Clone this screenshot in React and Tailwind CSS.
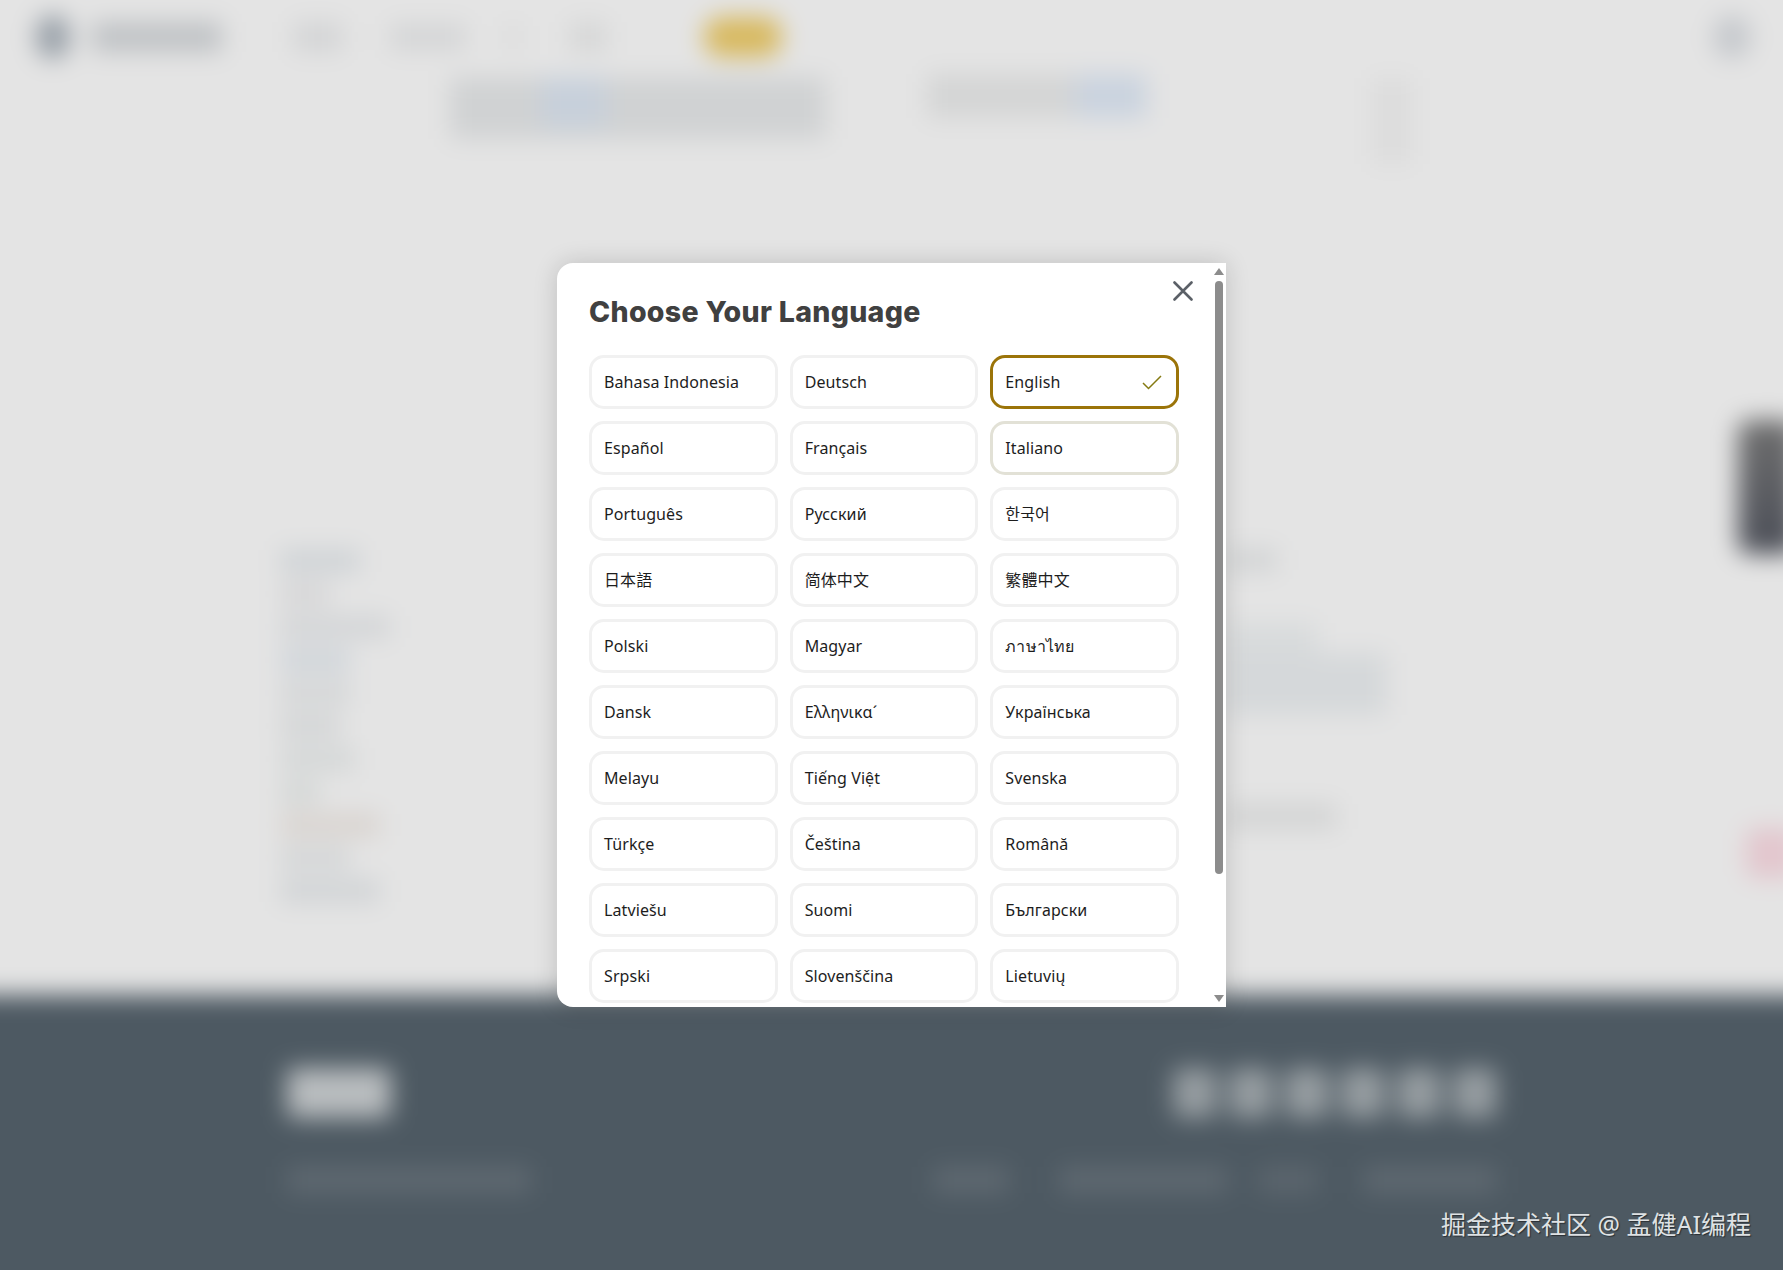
import React from "react";

const languages = [
  "Bahasa Indonesia", "Deutsch", "English",
  "Español", "Français", "Italiano",
  "Português", "Русский", "한국어",
  "日本語", "简体中文", "繁體中文",
  "Polski", "Magyar", "ภาษาไทย",
  "Dansk", "Ελληνικα´", "Українська",
  "Melayu", "Tiếng Việt", "Svenska",
  "Türkçe", "Čeština", "Română",
  "Latviešu", "Suomi", "Български",
  "Srpski", "Slovenščina", "Lietuvių",
];

const sideRows = [
  ["w-[80px]", "bg-[#cfd3d6]"],
  ["w-[50px]", "bg-[#d6d6d7]"],
  ["w-[110px]", "bg-[#d3d5d7]"],
  ["w-[70px]", "bg-[#d0d5da]"],
  ["w-[70px]", "bg-[#d4d6d7]"],
  ["w-[60px]", "bg-[#d3d5d6]"],
  ["w-[75px]", "bg-[#d4d7d7]"],
  ["w-[40px]", "bg-[#d4d7d6]"],
  ["w-[100px]", "bg-[#d9d4d0]"],
  ["w-[70px]", "bg-[#d4d6d7]"],
  ["w-[100px]", "bg-[#d1d4d6]"],
];

function Blob({ className }) {
  return <div className={className} />;
}

function BlurredPage() {
  return (
    <div className="relative -ml-10 -mt-10 h-[1350px] w-[1863px] bg-[#e4e4e4] pl-10 pt-10 blur-[12px]">
      {/* header */}
      <div className="flex h-[74px] items-center">
        <Blob className="ml-[36px] h-[44px] w-[34px] rounded-full bg-[#98a0a8]" />
        <Blob className="ml-[22px] h-[30px] w-[130px] bg-[#bfc2c5]" />
        <Blob className="ml-[71px] h-[30px] w-[50px] bg-[#d4d5d6]" />
        <Blob className="ml-[47px] h-[26px] w-[76px] bg-[#d4d5d6]" />
        <Blob className="ml-[40px] h-[24px] w-[14px] bg-[#d8d9d9]" />
        <Blob className="ml-[49px] h-[30px] w-[38px] bg-[#d6d7d7]" />
        <Blob className="ml-[97px] h-[40px] w-[78px] rounded-[18px] bg-[#d8b95f]" />
        <Blob className="ml-auto mr-[72px] h-[44px] w-[38px] rounded-full bg-[#c6c9cd]" />
      </div>

      {/* hero strip */}
      <div className="flex h-[83px] items-start pl-[450px]">
        <div className="mt-[3px] flex h-[62px] w-[376px] bg-[#d0d2d3]">
          <Blob className="ml-[92px] h-[50px] w-[64px] bg-[#c7d0db]" />
        </div>
        <div className="ml-[101px] flex h-[44px] w-[220px] bg-[#d4d5d5]">
          <Blob className="ml-auto h-full w-[72px] bg-[#cad3df]" />
        </div>
        <Blob className="ml-[225px] mt-[4px] h-[86px] w-[40px] bg-[#dcdcdc]" />
      </div>

      {/* body columns */}
      <div className="flex h-[838px] pl-[280px] pt-[392px]">
        <div className="flex w-[947px] flex-col gap-[9px]">
          {sideRows.map(([width, color], i) => (
            <Blob key={i} className={`h-[24px] ${width} ${color}`} />
          ))}
        </div>
        <div className="flex flex-col">
          <Blob className="h-[22px] w-[50px] bg-[#d1d3d4]" />
          <Blob className="mt-[52px] h-[30px] w-[90px] bg-[#d8dbdc]" />
          <Blob className="h-[62px] w-[160px] bg-[#d5d8da]" />
          <Blob className="mt-[89px] h-[25px] w-[110px] bg-[#d3d4d4]" />
        </div>
      </div>

      {/* footer */}
      <div className="-ml-10 h-[320px] bg-[#4d5962] pl-[327px] pr-[326px] pt-[73px]">
        <div className="flex h-[50px] items-center">
          <Blob className="h-[50px] w-[104px] rounded-md bg-[#b9bdbf]" />
          <div className="ml-auto flex gap-[12px]">
            {[0, 1, 2, 3, 4, 5].map((i) => (
              <Blob key={i} className="h-[50px] w-[44px] rounded-lg bg-[#969da1]" />
            ))}
          </div>
        </div>
        <div className="mt-[47px] flex h-[30px] items-center">
          <Blob className="h-[26px] w-[245px] bg-[#5f6971]" />
          <Blob className="ml-[402px] h-[26px] w-[76px] bg-[#5f6971]" />
          <Blob className="ml-[50px] h-[26px] w-[170px] bg-[#5f6971]" />
          <Blob className="ml-[30px] h-[26px] w-[60px] bg-[#5c666e]" />
          <Blob className="ml-[45px] h-[26px] w-[135px] bg-[#5f6971]" />
        </div>
      </div>

      {/* floating widgets on the right edge */}
      <div className="absolute left-[1778px] top-[460px] h-[134px] w-[60px] rounded-xl bg-gradient-to-b from-[#6f6f6f] to-[#4c4f58]" />
      <div className="absolute left-[1786px] top-[868px] h-[50px] w-[50px] rounded-lg bg-[#e3c6cd]" />
    </div>
  );
}

function LanguageButton({ label }) {
  const selected = label === "English";
  const hovered = label === "Italiano";
  let border = "border-[#f1f1f1]";
  if (selected) border = "border-[#9b7409]";
  if (hovered) border = "border-[#e2e1d6]";

  return (
    <button
      className={`flex h-[54px] items-center justify-between rounded-[15px] border-[3px] bg-white pl-[12px] pr-[14px] text-left text-[16px] tracking-[0.1px] text-[#1d1d1d] ${border}`}
    >
      <span>{label}</span>
      {selected && (
        <svg width="20" height="15" viewBox="0 0 20 15" fill="none" stroke="#857a12" strokeWidth="1.5">
          <path d="M1 8l5.5 5.5L19 1" />
        </svg>
      )}
    </button>
  );
}

function LanguageModal() {
  return (
    <div className="absolute left-[557px] top-[263px] flex h-[744px] w-[669px] overflow-hidden rounded-l-[16px] bg-white shadow-[0_0_24px_rgba(0,0,0,0.16)]">
      <div className="flex-1 overflow-hidden pl-[32px] pr-[32px] pt-[27px]">
        <h2 className="h-[65px] font-['Inter'] text-[28.5px] font-extrabold leading-[44px] tracking-[0.3px] text-[#404040]">
          Choose Your Language
        </h2>
        <div className="grid grid-cols-3 gap-x-[12px] gap-y-[12px]">
          {languages.map((label) => (
            <LanguageButton key={label} label={label} />
          ))}
        </div>
      </div>

      {/* scrollbar */}
      <div className="flex w-[15px] flex-col items-center py-[5px]">
        <svg width="10" height="7" viewBox="0 0 10 7" fill="#8c8c8c">
          <path d="M5 0l5 7H0z" />
        </svg>
        <div className="mt-[6px] h-[593px] w-[8px] rounded-full bg-[#8c8c8c]" />
        <svg className="mt-auto" width="10" height="7" viewBox="0 0 10 7" fill="#8c8c8c">
          <path d="M5 7L0 0h10z" />
        </svg>
      </div>

      {/* close */}
      <button className="absolute left-[616px] top-[18px]">
        <svg width="20" height="20" viewBox="0 0 20 20" fill="none" stroke="#5b6067" strokeWidth="2.6" strokeLinecap="round">
          <path d="M1.5 1.5l17 17M18.5 1.5l-17 17" />
        </svg>
      </button>
    </div>
  );
}

export default function App() {
  return (
    <div className="relative h-[1270px] w-full overflow-hidden font-['Noto_Sans','Noto_Sans_CJK_SC',sans-serif]">
      <BlurredPage />
      <LanguageModal />
      <div className="absolute left-[1441px] top-[1205px] text-[25px] leading-[38px] text-[#dfe2e4] [text-shadow:1px_1px_1px_#2b2f33]">
        掘金技术社区 @ 孟健AI编程
      </div>
    </div>
  );
}
